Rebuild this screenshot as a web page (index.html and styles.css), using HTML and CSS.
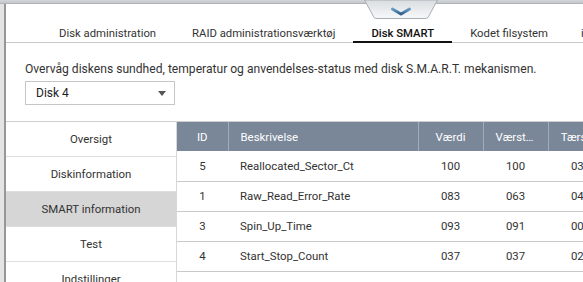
FILE: index.html
```html
<!DOCTYPE html>
<html lang="da">
<head>
<meta charset="utf-8">
<title>Disk SMART</title>
<link rel="stylesheet" href="styles.css">
</head>
<body>
<div class="window">
  <div class="topband"></div>
  <div class="handle">
    <svg width="74" height="19" viewBox="0 0 74 19">
      <defs>
        <linearGradient id="hg" x1="0" y1="0" x2="0" y2="1">
          <stop offset="0" stop-color="#d9dde1"/>
          <stop offset="1" stop-color="#f7f8f9"/>
        </linearGradient>
        <linearGradient id="cg" x1="0" y1="0" x2="0" y2="1">
          <stop offset="0" stop-color="#6a9cc6"/>
          <stop offset="1" stop-color="#2f5f8a"/>
        </linearGradient>
      </defs>
      <path d="M0.5 0 L10 17.5 Q11 18.5 13 18.5 L61 18.5 Q63 18.5 64 17.5 L73.5 0 Z" fill="url(#hg)" stroke="#a9aeb4" stroke-width="1"/>
      <path d="M28.5 9 L37 14 L45.5 9" fill="none" stroke="url(#cg)" stroke-width="3" stroke-linecap="round" stroke-linejoin="round"/>
    </svg>
  </div>
  <div class="frame">
    <nav class="tabs">
      <span class="tab">Disk administration</span>
      <span class="tab">RAID administrationsværktøj</span>
      <span class="tab active">Disk SMART</span>
      <span class="tab">Kodet filsystem</span>
      <span class="tab">iSCSI</span>
    </nav>
    <div class="content">
      <p class="desc">Overvåg diskens sundhed, temperatur og anvendelses-status med disk S.M.A.R.T. mekanismen.</p>
      <div class="select"><span>Disk 4</span><span class="arrow"></span></div>
    </div>
    <div class="panel">
      <ul class="sidenav">
        <li>Oversigt</li>
        <li>Diskinformation</li>
        <li class="sel">SMART information</li>
        <li>Test</li>
        <li>Indstillinger</li>
      </ul>
      <div class="tablewrap">
        <table class="grid">
          <colgroup>
            <col class="c-id"><col class="c-desc"><col class="c-val"><col class="c-val"><col class="c-val">
          </colgroup>
          <thead>
            <tr><th>ID</th><th class="left">Beskrivelse</th><th>Værdi</th><th>Værste værdi</th><th>Tærskel</th></tr>
          </thead>
          <tbody>
            <tr><td>5</td><td class="left">Reallocated_Sector_Ct</td><td>100</td><td>100</td><td>036</td></tr>
            <tr><td>1</td><td class="left">Raw_Read_Error_Rate</td><td>083</td><td>063</td><td>044</td></tr>
            <tr><td>3</td><td class="left">Spin_Up_Time</td><td>093</td><td>091</td><td>000</td></tr>
            <tr><td>4</td><td class="left">Start_Stop_Count</td><td>037</td><td>037</td><td>020</td></tr>
          </tbody>
        </table>
      </div>
    </div>
  </div>
</div>
</body>
</html>
```
FILE: styles.css
```css
* { box-sizing: border-box; }
html, body { margin: 0; padding: 0; }
body {
  width: 583px;
  height: 282px;
  overflow: hidden;
  background: #e4e4e4;
  font-family: Roboto, "Liberation Sans", sans-serif;
  color: #333;
}
.window { position: relative; height: 282px; }
.topband {
  height: 4px;
  background: linear-gradient(#d4d7da, #c3c7cb);
  border-bottom: 1px solid #b0b4b8;
}
.handle {
  position: absolute;
  left: 364px;
  top: 0;
  width: 74px;
  height: 19px;
  line-height: 0;
}
.frame {
  margin-left: 4px;
  border-left: 2px solid #979797;
  background: #fff;
  height: 278px;
  overflow: hidden;
}
.tabs {
  display: flex;
  height: 39px;
  padding-left: 35px;
  padding-top: 22px;
  border-bottom: 1px solid #c8c8c8;
  white-space: nowrap;
}
.tab {
  padding: 0 18px;
  font-size: 11.3px;
  line-height: 15px;
  color: #333;
  height: 17px;
}
.tab:nth-child(4) { padding-right: 15px; }
.tab.active {
  color: #111;
  font-weight: 500;
  border-bottom: 2px solid #111;
}
.content { padding: 18px 0 16px 19px; }
.desc {
  margin: 0;
  font-size: 12.1px;
  line-height: 16px;
  color: #333;
}
.select {
  margin-top: 4px;
  width: 150px;
  height: 24px;
  border: 1px solid #c6c6c6;
  display: flex;
  align-items: center;
  justify-content: space-between;
  padding: 0 8px 0 10px;
  font-size: 12px;
  color: #222;
}
.arrow {
  width: 0;
  height: 0;
  border-left: 4px solid transparent;
  border-right: 4px solid transparent;
  border-top: 5px solid #555;
}
.panel {
  display: flex;
  border-top: 1px solid #cfcfcf;
}
.sidenav {
  list-style: none;
  margin: 0;
  padding: 0;
  width: 171px;
  flex: none;
  border-right: 1px solid #d8d8d8;
}
.sidenav li {
  height: 35px;
  line-height: 34px;
  border-bottom: 1px solid #dedede;
  text-align: center;
  font-size: 11.4px;
  color: #333;
}
.sidenav li.sel { background: #d6d6d6; }
.tablewrap { flex: 1; overflow: hidden; }
.grid {
  table-layout: fixed;
  border-collapse: collapse;
  width: 436px;
  font-size: 11.4px;
}
.c-id { width: 51px; }
.c-desc { width: 190px; }
.c-val { width: 65px; }
.grid th {
  background: #7a8799;
  color: #fff;
  font-weight: 400;
  height: 29px;
  padding: 0 12px;
  text-align: center;
  border-left: 1px solid #a3adb9;
  white-space: nowrap;
  overflow: hidden;
  text-overflow: ellipsis;
}
.grid th:first-child { border-left: 0; }
.grid td {
  height: 30px;
  padding: 0;
  text-align: center;
  border-bottom: 1px solid #c9c9c9;
  color: #333;
  white-space: nowrap;
}
.grid .left { text-align: left; padding-left: 12px; }
```
